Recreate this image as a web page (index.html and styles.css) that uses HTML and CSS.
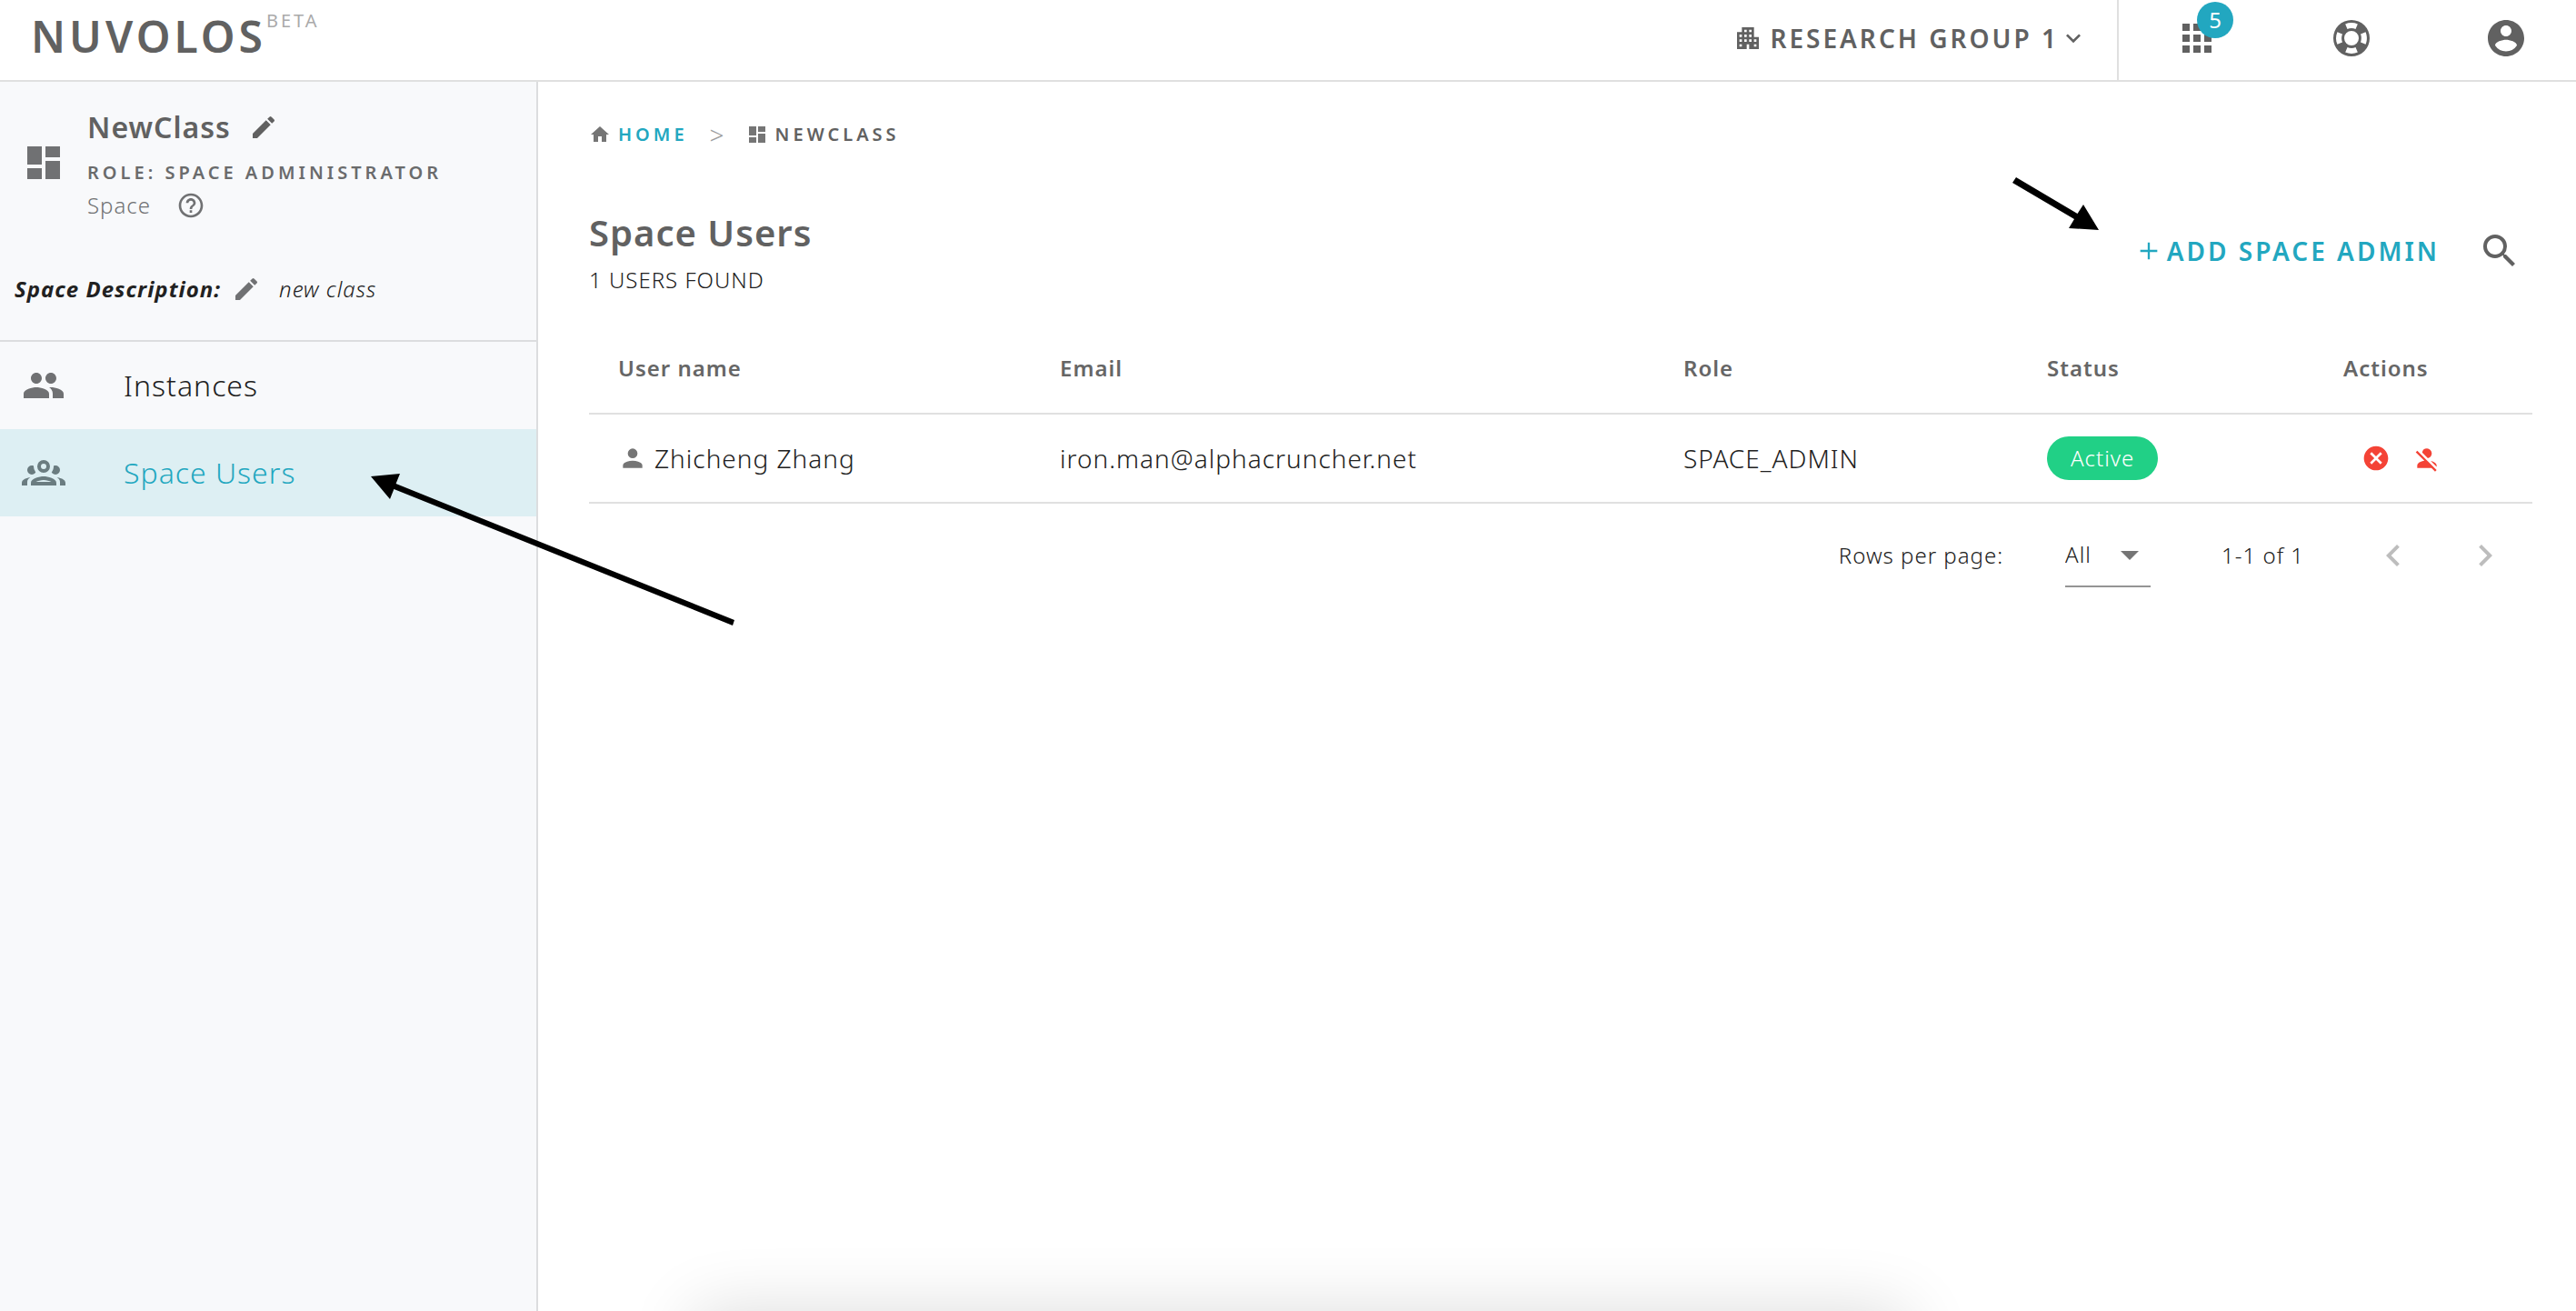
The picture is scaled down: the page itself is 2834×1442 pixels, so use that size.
FILE: index.html
```
<!DOCTYPE html>
<html lang="en">
<head>
<meta charset="utf-8">
<title>Nuvolos</title>
<link rel="stylesheet" href="styles.css">
</head>
<body>
<svg class="sprite" aria-hidden="true">
  <symbol id="i-dash" viewBox="0 0 24 24"><path d="M3 13h8V3H3v10zm0 8h8v-6H3v6zm10 0h8V11h-8v10zm0-18v6h8V3h-8z"/></symbol>
  <symbol id="i-pencil" viewBox="0 0 24 24"><path d="M3 17.25V21h3.75L17.81 9.94l-3.75-3.75L3 17.25zM20.71 7.04a1 1 0 0 0 0-1.41l-2.34-2.34a1 1 0 0 0-1.41 0l-1.83 1.83 3.75 3.75 1.83-1.83z"/></symbol>
  <symbol id="i-help" viewBox="0 0 24 24"><path d="M11 18h2v-2h-2v2zm1-16C6.48 2 2 6.48 2 12s4.48 10 10 10 10-4.480 10-10S17.520 2 12 2zm0 18c-4.410 0-8-3.590-8-8s3.590-8 8-8 8 3.590 8 8-3.590 8-8 8zm0-14c-2.210 0-4 1.790-4 4h2c0-1.100.9-2 2-2s2 .9 2 2c0 2-3 1.750-3 5h2c0-2.250 3-2.500 3-5 0-2.210-1.790-4-4-4z"/></symbol>
  <symbol id="i-people" viewBox="0 0 24 24"><path d="M16 11c1.660 0 2.990-1.340 2.990-3S17.660 5 16 5c-1.660 0-3 1.340-3 3s1.340 3 3 3zm-8 0c1.660 0 2.990-1.340 2.990-3S9.660 5 8 5C6.340 5 5 6.340 5 8s1.340 3 3 3zm0 2c-2.330 0-7 1.170-7 3.500V19h14v-2.500c0-2.330-4.670-3.500-7-3.500zm8 0c-.29 0-.62.02-.97.05 1.160.84 1.970 1.970 1.970 3.450V19h6v-2.500c0-2.330-4.670-3.500-7-3.500z"/></symbol>
  <symbol id="i-group" viewBox="0 0 24 24"><path d="M12 5a3.500 3.500 0 0 0-3.500 3.500A3.500 3.500 0 0 0 12 12a3.500 3.500 0 0 0 3.500-3.500A3.500 3.500 0 0 0 12 5m0 2a1.500 1.500 0 0 1 1.500 1.500A1.500 1.500 0 0 1 12 10a1.500 1.500 0 0 1-1.500-1.500A1.500 1.500 0 0 1 12 7M5.500 8A2.500 2.500 0 0 0 3 10.500c0 .94.53 1.750 1.290 2.180.36.2.77.32 1.210.32s.85-.12 1.210-.32c.37-.21.68-.51.91-.87A5.420 5.420 0 0 1 6.500 8.500v-.28c-.3-.14-.64-.22-1-.22m13 0c-.36 0-.7.08-1 .22v.28c0 1.200-.39 2.360-1.120 3.310.12.19.25.34.4.49a2.480 2.480 0 0 0 1.720.7c.44 0 .85-.12 1.210-.32.76-.43 1.290-1.240 1.290-2.180A2.500 2.500 0 0 0 18.500 8M12 14c-2.340 0-7 1.170-7 3.500V19h14v-1.500c0-2.330-4.660-3.500-7-3.500m-7.290.55C2.780 14.780 0 15.760 0 17.500V19h3v-1.930c0-1.010.69-1.850 1.710-2.520m14.580 0c1.020.67 1.710 1.510 1.710 2.520V19h3v-1.500c0-1.740-2.780-2.720-4.710-2.950M12 16c1.530 0 3.240.5 4.230 1H7.770c.99-.5 2.700-1 4.230-1z"/></symbol>
  <symbol id="i-city" viewBox="0 0 24 24"><path d="M17 11V3H7v4H3v14h8v-4h2v4h8V11h-4zM7 19H5v-2h2v2zm0-4H5v-2h2v2zm0-4H5V9h2v2zm4 4H9v-2h2v2zm0-4H9V9h2v2zm0-4H9V5h2v2zm4 8h-2v-2h2v2zm0-4h-2V9h2v2zm0-4h-2V5h2v2zm4 12h-2v-2h2v2zm0-4h-2v-2h2v2z"/></symbol>
  <symbol id="i-down" viewBox="0 0 24 24"><path d="M7.410 8.590 12 13.170l4.590-4.580L18 10l-6 6-6-6z"/></symbol>
  <symbol id="i-apps" viewBox="0 0 24 24"><path d="M4 8h4V4H4v4zm6 12h4v-4h-4v4zm-6 0h4v-4H4v4zm0-6h4v-4H4v4zm6 0h4v-4h-4v4zm6-10v4h4V4h-4zm-6 4h4V4h-4v4zm6 6h4v-4h-4v4zm0 6h4v-4h-4v4z"/></symbol>
  <symbol id="i-life" viewBox="0 0 24 24"><path d="M19.790 15.410c.74-1.670 1.050-4.170 0-6.820l-2.780 1.150c.57 1.250.57 2.970 0 4.520l2.780 1.150M15.420 4.210c-2.230-.95-4.680-.95-6.830 0l1.150 2.780c1.440-.61 3.080-.61 4.520 0l1.160-2.780M4.210 8.580c-.95 2.230-.95 4.690 0 6.840l2.780-1.160c-.6-1.440-.6-3.080 0-4.520L4.210 8.580m4.380 11.210c2.230.94 4.670.95 6.830 0l-1.150-2.780c-1.440.6-3.080.6-4.510 0l-1.170 2.780M12 2a10 10 0 0 1 10 10 10 10 0 0 1-10 10A10 10 0 0 1 2 12 10 10 0 0 1 12 2m0 6a4 4 0 0 0-4 4 4 4 0 0 0 4 4 4 4 0 0 0 4-4 4 4 0 0 0-4-4z"/></symbol>
  <symbol id="i-account" viewBox="0 0 24 24"><path d="M12 2C6.480 2 2 6.480 2 12s4.480 10 10 10 10-4.480 10-10S17.520 2 12 2zm0 3c1.660 0 3 1.340 3 3s-1.340 3-3 3-3-1.340-3-3 1.340-3 3-3zm0 14.200a7.200 7.200 0 0 1-6-3.220c.03-1.990 4-3.080 6-3.080 1.990 0 5.970 1.090 6 3.080a7.200 7.200 0 0 1-6 3.220z"/></symbol>
  <symbol id="i-home" viewBox="0 0 24 24"><path d="M10 20v-6h4v6h5v-8h3L12 3 2 12h3v8z"/></symbol>
  <symbol id="i-plus" viewBox="0 0 24 24"><path d="M20 13h-7v7h-2v-7H4v-2h7V4h2v7h7z"/></symbol>
  <symbol id="i-search" viewBox="0 0 24 24"><path d="M15.500 14h-.79l-.28-.27A6.471 6.471 0 0 0 16 9.500 6.500 6.500 0 1 0 9.500 16c1.610 0 3.090-.59 4.230-1.570l.27.28v.79l5 4.990L20.490 19l-4.990-5zm-6 0C7.010 14 5 11.990 5 9.500S7.010 5 9.500 5 14 7.010 14 9.500 11.990 14 9.500 14z"/></symbol>
  <symbol id="i-person" viewBox="0 0 24 24"><path d="M12 4a4 4 0 1 1 0 8 4 4 0 0 1 0-8m0 10c4.420 0 8 1.790 8 4v2H4v-2c0-2.210 3.580-4 8-4z"/></symbol>
  <symbol id="i-cancel" viewBox="0 0 24 24"><path d="M12 2C6.470 2 2 6.470 2 12s4.470 10 10 10 10-4.470 10-10S17.530 2 12 2zm5 13.590L15.590 17 12 13.410 8.410 17 7 15.590 10.590 12 7 8.410 8.410 7 12 10.590 15.590 7 17 8.410 13.410 12 17 15.590z"/></symbol>
  <symbol id="i-off" viewBox="0 0 24 24"><path d="M12 4a4 4 0 0 1 4 4c0 1.950-1.400 3.580-3.250 3.930L8.070 7.250A4.004 4.004 0 0 1 12 4m.28 10 6 6L20 21.720 18.730 23l-3-3H4v-2c0-1.840 2.500-3.390 5.870-3.860L2.780 7.050l1.270-1.270L12.280 14M20 18v1.180l-4.860-4.860C18 14.930 20 16.350 20 18z"/></symbol>
  <symbol id="i-caret" viewBox="0 0 24 24"><path d="M7 10l5 5 5-5z"/></symbol>
  <symbol id="i-left" viewBox="0 0 24 24"><path d="M15.410 7.410 14 6l-6 6 6 6 1.410-1.410L10.830 12z"/></symbol>
  <symbol id="i-right" viewBox="0 0 24 24"><path d="M8.590 16.590 13.170 12 8.590 7.410 10 6l6 6-6 6z"/></symbol>
</svg>

<header class="topbar">
  <a class="logo" href="#">NUVOLOS<sup class="beta">BETA</sup></a>
  <button class="org" type="button">
    <svg class="ico ico-m"><use href="#i-city"/></svg><span>RESEARCH GROUP 1</span><svg class="ico ico-m"><use href="#i-down"/></svg>
  </button>
  <nav class="tools" aria-label="Account">
    <button class="tool" type="button" aria-label="Apps"><svg class="ico ico-l"><use href="#i-apps"/></svg><span class="badge">5</span></button>
    <button class="tool" type="button" aria-label="Support"><svg class="ico ico-l"><use href="#i-life"/></svg></button>
    <button class="tool" type="button" aria-label="Profile"><svg class="ico ico-l"><use href="#i-account"/></svg></button>
  </nav>
</header>

<div class="layout">
  <aside class="sidebar">
    <section class="space">
      <svg class="ico ico-l"><use href="#i-dash"/></svg>
      <div class="space-info">
        <div class="space-name">NewClass<button type="button" aria-label="Edit name"><svg class="ico ico-m"><use href="#i-pencil"/></svg></button></div>
        <div class="space-role">ROLE: SPACE ADMINISTRATOR</div>
        <div class="space-kind">Space<button type="button" aria-label="Help"><svg class="ico ico-m"><use href="#i-help"/></svg></button></div>
      </div>
    </section>
    <p class="desc"><strong>Space Description:</strong><button type="button" aria-label="Edit description"><svg class="ico ico-m"><use href="#i-pencil"/></svg></button><span>new class</span></p>
    <nav class="menu" aria-label="Space">
      <a href="#"><svg class="ico ico-l"><use href="#i-people"/></svg>Instances</a>
      <a class="active" href="#"><svg class="ico ico-l"><use href="#i-group"/></svg>Space Users</a>
    </nav>
  </aside>

  <main class="content">
    <nav class="crumbs" aria-label="Breadcrumb">
      <a href="#"><svg class="ico ico-xs"><use href="#i-home"/></svg>HOME</a>
      <span class="sep">&gt;</span>
      <span class="here"><svg class="ico ico-xs"><use href="#i-dash"/></svg>NEWCLASS</span>
    </nav>

    <div class="heading">
      <div>
        <h1>Space Users</h1>
        <p class="count">1 USERS FOUND</p>
      </div>
      <div class="heading-actions">
        <button class="add" type="button"><svg class="ico ico-s"><use href="#i-plus"/></svg>ADD SPACE ADMIN</button>
        <button type="button" aria-label="Search"><svg class="ico ico-l"><use href="#i-search"/></svg></button>
      </div>
    </div>

    <table class="users">
      <colgroup><col class="c-name"><col class="c-email"><col class="c-role"><col class="c-status"><col class="c-actions"></colgroup>
      <thead><tr><th>User name</th><th>Email</th><th>Role</th><th>Status</th><th>Actions</th></tr></thead>
      <tbody>
        <tr>
          <td><div class="cell"><svg class="ico ico-m grey"><use href="#i-person"/></svg>Zhicheng Zhang</div></td>
          <td>iron.man@alphacruncher.net</td>
          <td>SPACE_ADMIN</td>
          <td><span class="chip">Active</span></td>
          <td><div class="row-actions">
            <button type="button" aria-label="Remove user"><svg class="ico ico-m"><use href="#i-cancel"/></svg></button>
            <button type="button" aria-label="Revoke role"><svg class="ico ico-m"><use href="#i-off"/></svg></button>
          </div></td>
        </tr>
      </tbody>
    </table>

    <div class="pager">
      <label for="rows">Rows per page:</label>
      <div class="select"><select id="rows"><option>All</option></select><svg class="ico ico-l"><use href="#i-caret"/></svg></div>
      <span class="range">1-1 of 1</span>
      <button type="button" aria-label="Previous page" disabled><svg class="ico ico-l"><use href="#i-left"/></svg></button>
      <button type="button" aria-label="Next page" disabled><svg class="ico ico-l"><use href="#i-right"/></svg></button>
    </div>
  </main>
</div>

<svg class="arrow arrow-menu" viewBox="0 0 408 176" aria-hidden="true"><path d="M4 8 36 5 31.600 16 404 166 402 172 29.400 22 25 33z"/></svg>
<svg class="arrow arrow-add" viewBox="0 0 100 62" aria-hidden="true"><path d="M9 1 76.500 41 83 31 100 59 67 57 73 47 5 7z"/></svg>
<div class="tray" aria-hidden="true"></div>
</body>
</html>
```
FILE: styles.css
```
* { box-sizing: border-box; }
body {
  margin: 0;
  min-height: 100vh;
  display: flex;
  flex-direction: column;
  background: #fff;
  color: #212121;
  font: 300 24px/32px "Noto Sans", "Open Sans", sans-serif;
  letter-spacing: 1px;
  overflow: hidden;
}
h1, p { margin: 0; }
a { color: inherit; text-decoration: none; }
strong { font-weight: 700; }
button { display: inline-flex; align-items: center; padding: 0; border: 0; background: none; color: inherit; font: inherit; letter-spacing: inherit; }
.sprite { display: none; }
.ico { flex: none; display: block; fill: currentColor; }
.ico-xs { width: 24px; height: 24px; }
.ico-s { width: 28px; height: 28px; }
.ico-m { width: 32px; height: 32px; }
.ico-l { width: 48px; height: 48px; }
.grey { color: #757575; }

.topbar { display: flex; height: 90px; border-bottom: 2px solid #e0e0e0; color: #616161; }
.logo { display: flex; margin-right: auto; padding: 8px 0 0 34px; font-size: 48px; line-height: 64px; font-weight: 600; letter-spacing: 4px; }
.beta { margin-top: 5px; font-size: 20px; line-height: 20px; font-weight: 400; letter-spacing: 3px; color: #aaa; }
.org { padding: 0 32px 4px 0; font-size: 28px; font-weight: 600; letter-spacing: 3px; }
.org span { margin-left: 8px; }
.tools { display: flex; align-items: center; padding: 0 53px 4px 62px; gap: 122px; border-left: 2px solid #e0e0e0; }
.tool { position: relative; }
.badge { position: absolute; left: 24px; top: -16px; width: 40px; height: 40px; border-radius: 50%; background: #22a7c0; color: #fff; font-size: 24px; font-weight: 400; line-height: 40px; text-align: center; letter-spacing: 0; }

.layout { flex: 1; display: flex; }
.sidebar { flex: none; width: 592px; border-right: 2px solid #dcdddf; background: #f8f9fb; }
.space { display: flex; align-items: center; gap: 24px; padding: 26px 24px 0; color: #707173; }
.space-name { display: flex; align-items: center; gap: 20px; font-size: 32px; line-height: 48px; font-weight: 600; color: #616161; }
.space-role { margin-top: 6px; font-size: 20px; line-height: 40px; font-weight: 600; letter-spacing: 4px; color: #6a6b6c; white-space: nowrap; }
.space-kind { display: flex; align-items: center; gap: 28px; }
.desc { display: flex; align-items: center; height: 134px; padding: 20px 16px 0; gap: 12px; border-bottom: 2px solid #dcdddf; font-style: italic; }
.desc button { color: #707173; }
.desc span { margin-left: 8px; }
.menu a { display: flex; align-items: center; gap: 64px; height: 96px; padding-left: 24px; font-size: 32px; }
.menu svg { color: #707173; }
.menu .active { background: #ddeff3; color: #22a7c0; }
.menu .active svg { color: #6a7c80; }

.content { flex: 1; padding: 42px 48px 0 56px; }
.crumbs { display: flex; align-items: center; height: 32px; font-size: 20px; font-weight: 600; letter-spacing: 4px; color: #616161; }
.crumbs a, .here { display: flex; align-items: center; gap: 8px; color: #22a7c0; }
.crumbs svg { color: #757575; }
.crumbs .here { color: #616161; }
.sep { margin: 0 20px 0 24px; font-size: 28px; font-weight: 300; color: #9e9e9e; }

.heading { display: flex; justify-content: space-between; align-items: center; margin-top: 60px; }
h1 { font-size: 40px; line-height: 64px; font-weight: 600; color: #616161; }
.count { line-height: 40px; }
.heading-actions { display: flex; align-items: center; gap: 42px; padding-right: 12px; color: #616161; }
.add { gap: 6px; font-size: 28px; font-weight: 600; letter-spacing: 3px; color: #22a7c0; }

.users { width: 100%; margin-top: 27px; border-collapse: collapse; table-layout: fixed; }
.c-name { width: 502px; }
.c-email { width: 686px; }
.c-role { width: 400px; }
.c-status { width: 326px; }
.users th { height: 100px; padding: 0 0 0 32px; border-bottom: 2px solid #e0e0e0; text-align: left; font-weight: 600; color: #666; }
.users td { height: 98px; padding: 0 0 0 32px; border-bottom: 2px solid #e0e0e0; font-size: 28px; }
.users th + th, .users td + td { padding-left: 16px; }
.cell { display: flex; align-items: center; gap: 8px; }
.chip { display: inline-block; height: 48px; padding: 0 26px; border-radius: 24px; background: #21d086; color: #fff; font-size: 24px; line-height: 48px; vertical-align: middle; }
.row-actions { display: flex; gap: 24px; padding-left: 20px; color: #f44336; }

.pager { display: flex; align-items: center; justify-content: flex-end; height: 114px; padding-right: 28px; }
.select { position: relative; width: 94px; margin: 0 78px 0 68px; border-bottom: 2px solid #949494; }
.select select { width: 100%; height: 68px; padding: 0; border: 0; background: none; appearance: none; color: inherit; font: inherit; letter-spacing: inherit; }
.select svg { position: absolute; right: -1px; top: 10px; color: #757575; pointer-events: none; }
.range { margin-right: 74px; }
.pager button { color: #bdbdbd; }
.pager button + button { margin-left: 53px; }

.arrow { position: absolute; fill: #000; }
.arrow-menu { left: 404px; top: 516px; width: 408px; height: 176px; }
.arrow-add { left: 2209px; top: 194px; width: 100px; height: 62px; }
.tray { position: fixed; left: 764px; right: 736px; top: 100%; height: 200px; box-shadow: 0 0 76px rgba(0, 0, 0, .14); }
```
